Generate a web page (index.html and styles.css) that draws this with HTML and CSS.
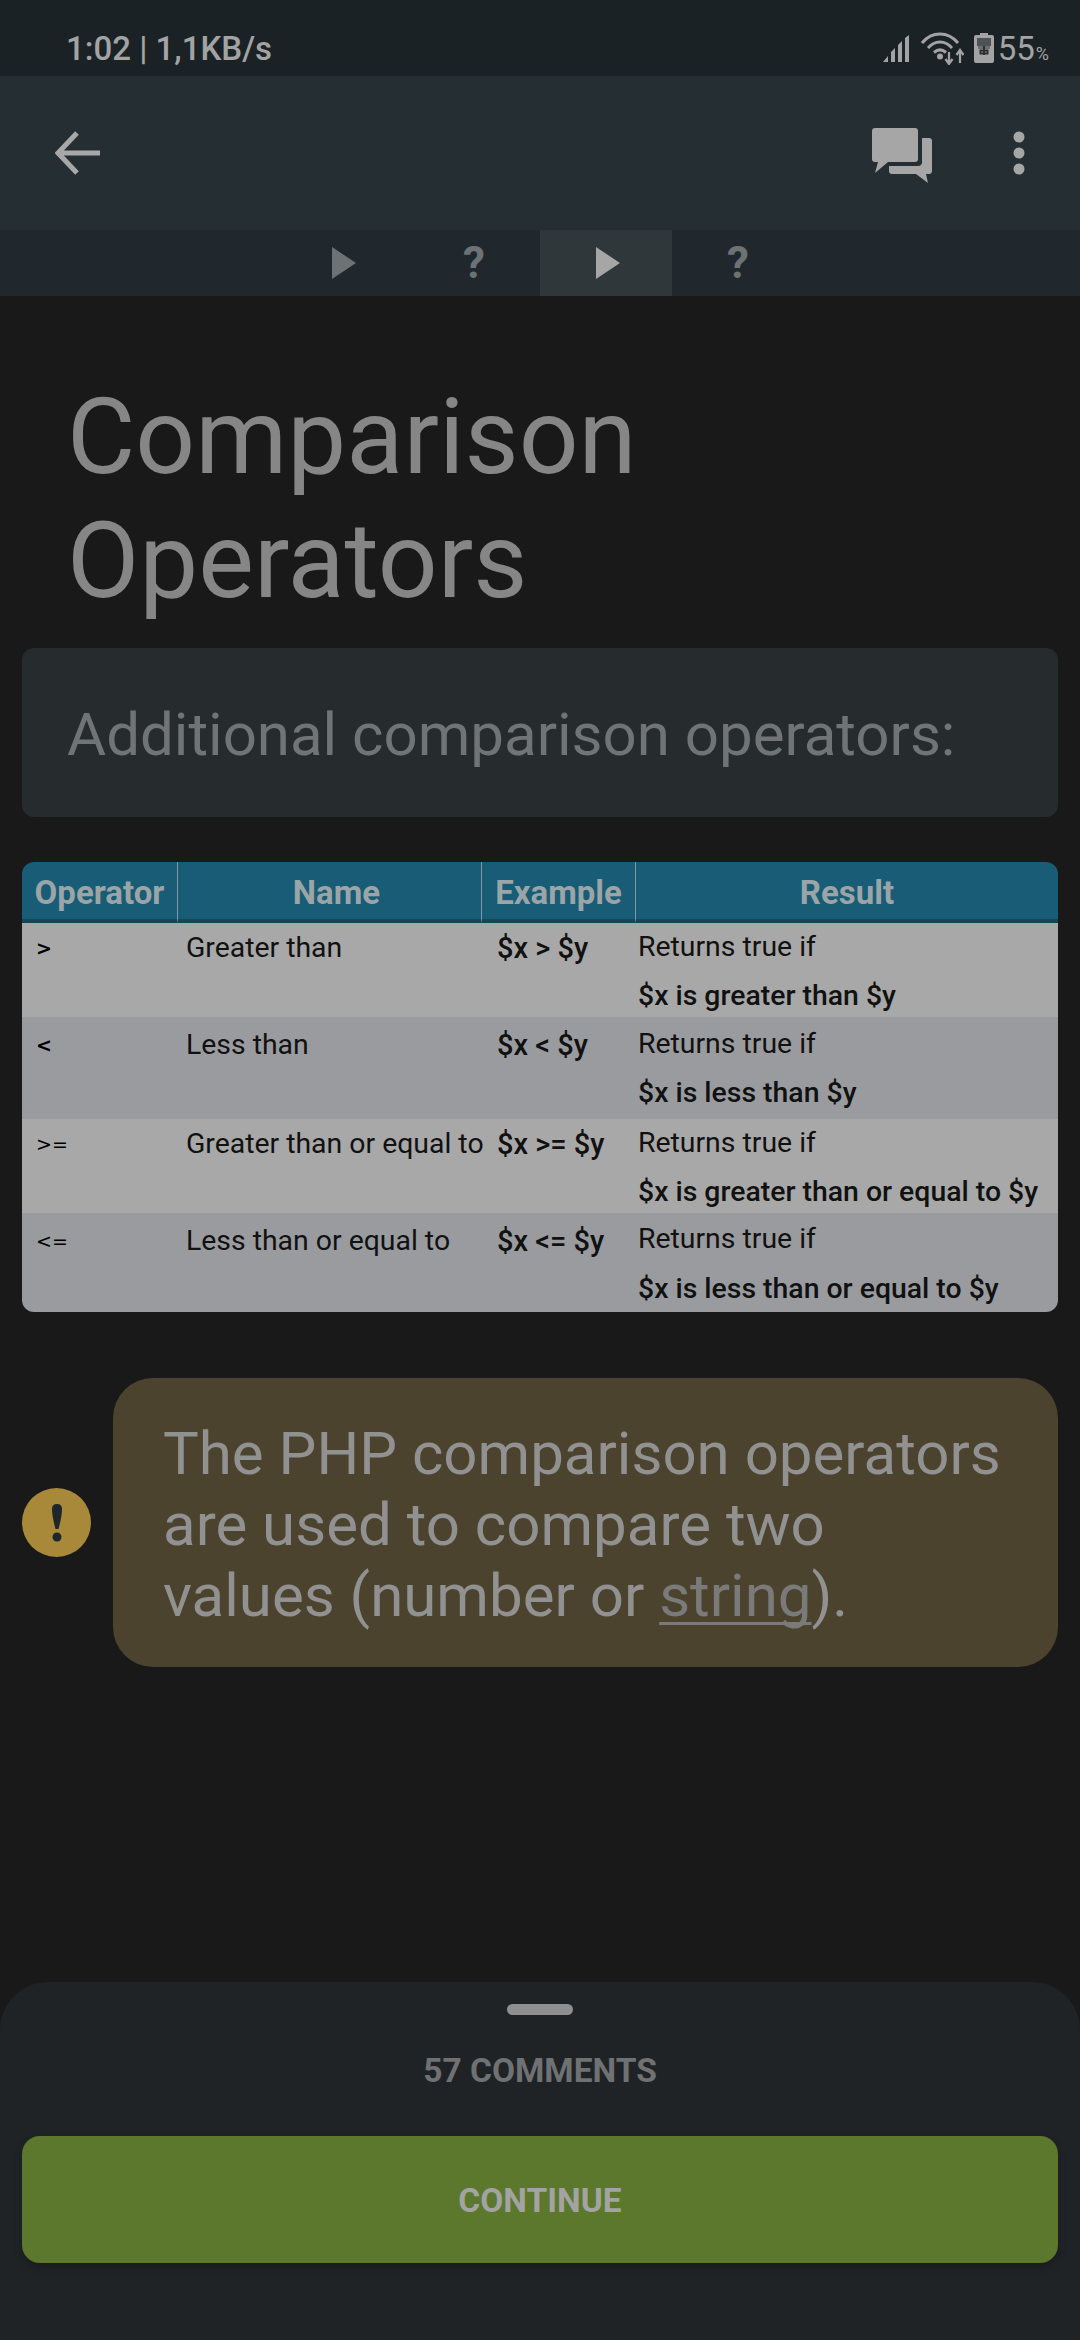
FILE: index.html
```html
<!DOCTYPE html>
<html lang="en">
<head>
  <meta charset="UTF-8">
  <meta name="viewport" content="width=device-width, initial-scale=1.0">
  <title>Comparison Operators</title>
  <link rel="stylesheet" href="styles.css">
</head>
<body>
  <!-- Status Bar -->
  <div class="status-bar">
    <span class="status-time">1:02 | 1,1KB/s</span>
    <div class="status-icons">
      <svg class="icon-signal" width="26" height="27" viewBox="0 0 26 27">
        <path d="M0 27 L5 21 V27 Z M8 17 L12 13 V27 H8 Z M15 10 L19 6 V27 H15 Z M22 3 L26 0 V27 H22 Z" fill="#a3a3a3"/>
      </svg>
      <svg class="icon-wifi" width="43" height="33" viewBox="0 0 43 33">
        <path d="M1 11 C11 -1 27 -1 37 11 M7 16 C14 8 24 8 31 16 M13 20.500 C17 17 21 17 25 20.500" fill="none" stroke="#a3a3a3" stroke-width="3"/>
        <circle cx="19" cy="24.500" r="3" fill="#a3a3a3"/>
        <path d="M28 20 V31 M24.500 27 L28 32 L31.500 27 M39 31 V19 M35.500 23 L39 18 L42.500 23" fill="none" stroke="#a3a3a3" stroke-width="2.200"/>
      </svg>
      <svg class="icon-battery" width="20" height="30" viewBox="0 0 20 30">
        <path d="M6 0 H14 V2 H18 Q20 2 20 4 V28 Q20 30 18 30 H2 Q0 30 0 28 V4 Q0 2 2 2 H6 Z" fill="#a3a3a3"/>
        <rect x="3" y="5" width="14" height="8" fill="#4d5254"/>
        <path d="M4 13 H16 V16 H4 Z" fill="#6a6e70"/>
        <path d="M10 13 V22 M6.500 17.500 H13.500 V20.500 H6.500 Z" fill="none" stroke="#2a2f32" stroke-width="2"/>
      </svg>
      <span class="status-battery">55<small>%</small></span>
    </div>
  </div>

  <!-- Toolbar -->
  <div class="toolbar">
    <svg class="icon-back" width="46" height="44" viewBox="0 0 46 44">
      <path d="M22 2 L3 22 L22 42 M3.500 22 H45" fill="none" stroke="#a8a8a8" stroke-width="5"/>
    </svg>
    <div class="toolbar-actions">
      <svg width="60" height="55" viewBox="0 0 60 55">
        <path d="M3 0 H43 Q46 0 46 3 V31 Q46 34 43 34 H16 L3 45 L6 34 H3 Q0 34 0 31 V3 Q0 0 3 0 Z" fill="#a6a6a6"/>
        <path d="M50 10 H57 Q60 10 60 13 V43 Q60 46 57 46 H54 L56 55 L44 46 H20 Q17 46 17 43 V38 H46 Q50 38 50 34 Z" fill="#a6a6a6"/>
      </svg>
      <svg width="12" height="44" viewBox="0 0 12 44">
        <circle cx="6" cy="6" r="5.500" fill="#a6a6a6"/>
        <circle cx="6" cy="22" r="5.500" fill="#a6a6a6"/>
        <circle cx="6" cy="38" r="5.500" fill="#a6a6a6"/>
      </svg>
    </div>
  </div>

  <!-- Lesson Tabs -->
  <div class="tabs">
    <div class="tab"><span class="tab-play"></span></div>
    <div class="tab"><span class="tab-quiz">?</span></div>
    <div class="tab active"><span class="tab-play"></span></div>
    <div class="tab"><span class="tab-quiz">?</span></div>
  </div>

  <!-- Lesson Content -->
  <div class="content">
    <h1 class="title">Comparison<br>Operators</h1>
    <div class="subtitle-card">Additional comparison operators:</div>

    <table class="operators">
      <thead>
        <tr>
          <th class="col-op">Operator</th>
          <th class="col-name">Name</th>
          <th class="col-example">Example</th>
          <th>Result</th>
        </tr>
      </thead>
      <tbody>
        <tr class="row-a">
          <td class="op strong">&gt;</td>
          <td class="name">Greater than</td>
          <td class="example">$x &gt; $y</td>
          <td class="result">Returns true if<b>$x is greater than $y</b></td>
        </tr>
        <tr class="row-b">
          <td class="op strong">&lt;</td>
          <td class="name">Less than</td>
          <td class="example">$x &lt; $y</td>
          <td class="result">Returns true if<b>$x is less than $y</b></td>
        </tr>
        <tr class="row-c">
          <td class="op">&gt;=</td>
          <td class="name">Greater than or equal to</td>
          <td class="example">$x &gt;= $y</td>
          <td class="result">Returns true if<b>$x is greater than or equal to $y</b></td>
        </tr>
        <tr class="row-d">
          <td class="op">&lt;=</td>
          <td class="name">Less than or equal to</td>
          <td class="example">$x &lt;= $y</td>
          <td class="result">Returns true if<b>$x is less than or equal to $y</b></td>
        </tr>
      </tbody>
    </table>

    <div class="notice">
      <span class="notice-icon">
        <svg width="16" height="38" viewBox="0 0 16 38">
          <path d="M8 0 Q13 0 13 5 Q13 12 9.500 25 H6.500 Q3 12 3 5 Q3 0 8 0 Z" fill="#1f262b"/>
          <circle cx="8" cy="33" r="4.500" fill="#1f262b"/>
        </svg>
      </span>
      <div class="notice-bubble">The PHP comparison operators are used to compare two values (number or <u>string</u>).</div>
    </div>
  </div>

  <!-- Bottom Sheet -->
  <div class="sheet">
    <div class="sheet-handle"></div>
    <div class="sheet-comments">57 COMMENTS</div>
    <button class="continue-button">CONTINUE</button>
  </div>
</body>
</html>
```

FILE: styles.css
```css
/* General Styling */
* {
  box-sizing: border-box;
}

body {
  margin: 0;
  width: 1080px;
  height: 2340px;
  overflow: hidden;
  display: flex;
  flex-direction: column;
  font-family: Roboto, sans-serif;
  background: #191919;
  color: #8f8f8f;
}

/* Status Bar */
.status-bar {
  height: 76px;
  flex-shrink: 0;
  padding: 20px 31px 0 66px;
  display: flex;
  align-items: center;
  justify-content: space-between;
  background: #1b2226;
}

.status-time {
  font-size: 33px;
  font-weight: 500;
  color: #a3a3a3;
}

.status-icons {
  display: flex;
  align-items: center;
}

.icon-signal {
  margin-right: 12px;
}

.icon-wifi {
  margin-right: 10px;
}

.status-battery {
  margin-left: 4px;
  font-size: 33px;
  color: #a3a3a3;
}

.status-battery small {
  font-size: 18px;
  margin-left: 1px;
}

/* Toolbar */
.toolbar {
  height: 154px;
  flex-shrink: 0;
  padding: 0 55px;
  display: flex;
  align-items: center;
  justify-content: space-between;
  background: #252e33;
}

.toolbar-actions {
  display: flex;
  align-items: center;
  gap: 81px;
}

.toolbar-actions svg:first-child {
  margin-top: 4px;
}

/* Lesson Tabs */
.tabs {
  height: 66px;
  flex-shrink: 0;
  display: flex;
  justify-content: center;
  background: #20282d;
}

.tab {
  width: 132px;
  display: flex;
  align-items: center;
  justify-content: center;
}

.tab.active {
  background: #2f373b;
}

.tab-play {
  width: 0;
  height: 0;
  margin-left: 4px;
  border-style: solid;
  border-width: 16px 0 16px 24px;
  border-color: transparent transparent transparent #6d7275;
}

.tab.active .tab-play {
  border-left-color: #a6a6a6;
}

.tab-quiz {
  font-size: 44px;
  font-weight: 700;
  color: #6d7275;
}

/* Lesson Content */
.content {
  padding: 0 22px;
}

.title {
  margin: 0;
  padding: 80px 0 0 45px;
  font-size: 105px;
  font-weight: 400;
  line-height: 124px;
  color: #868686;
}

.subtitle-card {
  height: 169px;
  margin-top: 24px;
  padding: 4px 0 0 45px;
  display: flex;
  align-items: center;
  font-size: 60px;
  color: #707476;
  background: #262b2e;
  border-radius: 12px;
}

/* Operators Table */
.operators {
  width: 1036px;
  margin-top: 45px;
  table-layout: fixed;
  border-collapse: separate;
  border-spacing: 0;
  border-radius: 12px;
  overflow: hidden;
  font-size: 28.400px;
  color: #111;
}

.operators th {
  height: 61px;
  padding: 4px 0 0;
  font-size: 33px;
  font-weight: 700;
  color: #9ba5a8;
  background: #185c75;
  border-bottom: 4px solid #154656;
  border-right: 1px solid #7c9aa5;
}

.operators th:last-child {
  border-right: none;
}

.operators th.col-name {
  padding-left: 14px;
}

.col-op {
  width: 156px;
}

.col-name {
  width: 304px;
}

.col-example {
  width: 154px;
}

td {
  padding: 0;
  vertical-align: top;
}

.op {
  padding-left: 14px;
  font-family: "DejaVu Sans", sans-serif;
  font-size: 19px;
  line-height: 50px;
  color: #000;
}

.op.strong {
  font-weight: 700;
}

.name {
  padding-left: 8px;
  line-height: 50px;
  white-space: nowrap;
}

.example {
  padding-left: 15px;
  font-size: 29px;
  font-weight: 500;
  line-height: 50px;
  white-space: nowrap;
}

.result {
  padding-left: 2px;
  line-height: 48px;
  white-space: nowrap;
}

.result b {
  display: block;
  margin: 1px 0 -3px;
  font-weight: 500;
}

.row-a,
.row-c {
  background: #a8a8a8;
}

.row-b,
.row-d {
  background: #9a9b9f;
}

.row-a,
.row-c {
  height: 94px;
}

.row-b {
  height: 102px;
}

.row-d {
  height: 99px;
}

.row-b td {
  padding-top: 3px;
}

.row-d td {
  padding-top: 2px;
}

.row-d .result b {
  margin-top: 2px;
}

.row-d .name,
.row-d .example,
.row-d .op {
  padding-top: 3px;
}

/* Notice */
.notice {
  margin-top: 66px;
  display: flex;
  align-items: center;
  gap: 22px;
}

.notice-icon {
  width: 69px;
  height: 69px;
  flex-shrink: 0;
  display: flex;
  align-items: center;
  justify-content: center;
  background: #a8893a;
  border-radius: 50%;
}

.notice-bubble {
  width: 945px;
  height: 289px;
  padding: 40px 53px 0 50px;
  font-size: 60px;
  line-height: 71px;
  color: #919191;
  background: #4c432e;
  border-radius: 40px;
}

.notice-bubble u {
  color: #7a7a7a;
  text-decoration-thickness: 3px;
  text-underline-offset: 6px;
  text-decoration-skip-ink: none;
}

/* Bottom Sheet */
.sheet {
  height: 358px;
  margin-top: auto;
  padding: 22px 22px 0;
  display: flex;
  flex-direction: column;
  align-items: center;
  background: #1f2326;
  border-radius: 48px 48px 0 0;
}

.sheet-handle {
  width: 66px;
  height: 11px;
  background: #8f8f8f;
  border-radius: 6px;
}

.sheet-comments {
  margin-top: 36px;
  font-size: 33.500px;
  font-weight: 700;
  line-height: 40px;
  color: #6f7173;
}

.continue-button {
  width: 1036px;
  height: 127px;
  margin-top: 45px;
  padding-top: 2px;
  border: none;
  border-radius: 18px;
  font-family: Roboto, sans-serif;
  font-size: 33.500px;
  font-weight: 700;
  color: #a3a3a3;
  background: #5c782c;
  box-shadow: 0 4px 8px rgba(0, 0, 0, 0.2);
}
```
